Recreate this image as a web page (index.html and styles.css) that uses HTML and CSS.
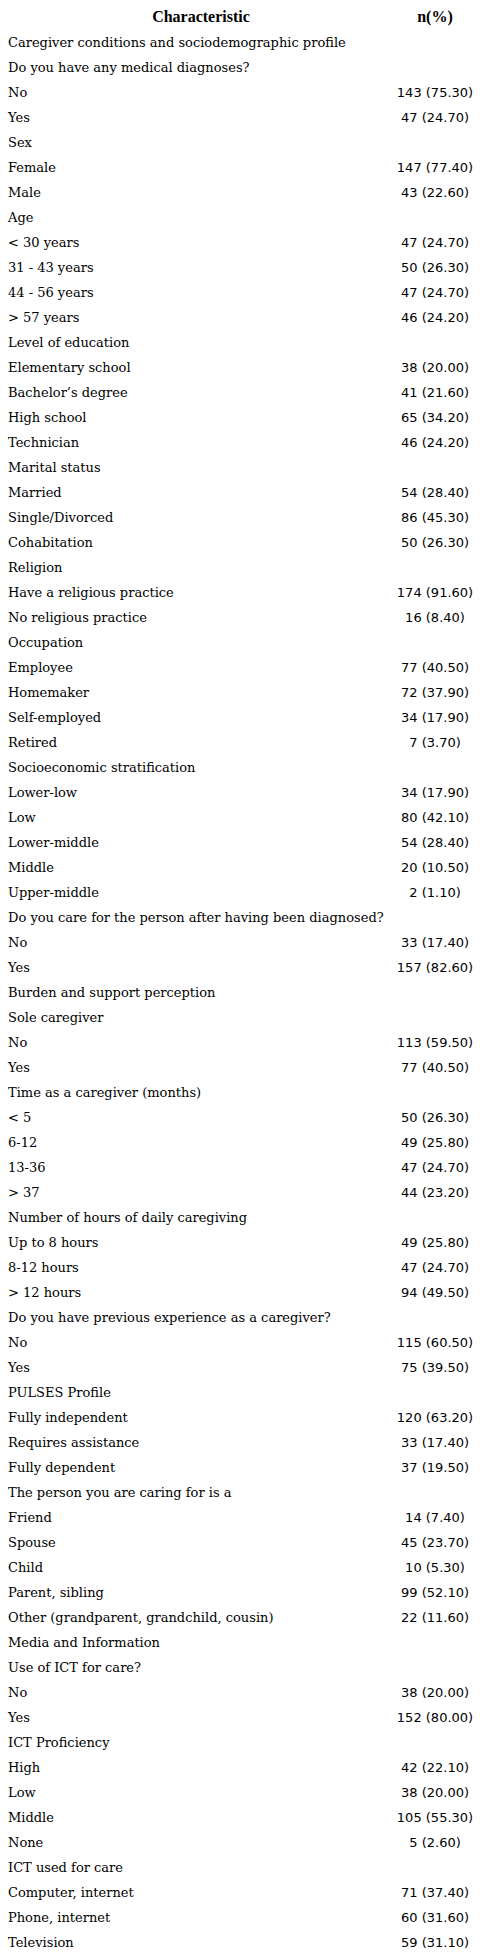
FILE: index.html
```html
<!DOCTYPE html>
<html lang="en">
<head>
<meta charset="utf-8">
<title>Caregiver characteristics</title>
<link rel="stylesheet" href="styles.css">
</head>
<body>
<table class="data">
<thead>
<tr><th class="c1">Characteristic</th><th class="c2">n(%)</th></tr>
</thead>
<tbody>
<tr><td>Caregiver conditions and sociodemographic profile</td><td></td></tr>
<tr><td>Do you have any medical diagnoses?</td><td></td></tr>
<tr><td>No</td><td>143 (75.30)</td></tr>
<tr><td>Yes</td><td>47 (24.70)</td></tr>
<tr><td>Sex</td><td></td></tr>
<tr><td>Female</td><td>147 (77.40)</td></tr>
<tr><td>Male</td><td>43 (22.60)</td></tr>
<tr><td>Age</td><td></td></tr>
<tr><td>&lt; 30 years</td><td>47 (24.70)</td></tr>
<tr><td>31 - 43 years</td><td>50 (26.30)</td></tr>
<tr><td>44 - 56 years</td><td>47 (24.70)</td></tr>
<tr><td>&gt; 57 years</td><td>46 (24.20)</td></tr>
<tr><td>Level of education</td><td></td></tr>
<tr><td>Elementary school</td><td>38 (20.00)</td></tr>
<tr><td>Bachelor’s degree</td><td>41 (21.60)</td></tr>
<tr><td>High school</td><td>65 (34.20)</td></tr>
<tr><td>Technician</td><td>46 (24.20)</td></tr>
<tr><td>Marital status</td><td></td></tr>
<tr><td>Married</td><td>54 (28.40)</td></tr>
<tr><td>Single/Divorced</td><td>86 (45.30)</td></tr>
<tr><td>Cohabitation</td><td>50 (26.30)</td></tr>
<tr><td>Religion</td><td></td></tr>
<tr><td>Have a religious practice</td><td>174 (91.60)</td></tr>
<tr><td>No religious practice</td><td>16 (8.40)</td></tr>
<tr><td>Occupation</td><td></td></tr>
<tr><td>Employee</td><td>77 (40.50)</td></tr>
<tr><td>Homemaker</td><td>72 (37.90)</td></tr>
<tr><td>Self-employed</td><td>34 (17.90)</td></tr>
<tr><td>Retired</td><td>7 (3.70)</td></tr>
<tr><td>Socioeconomic stratification</td><td></td></tr>
<tr><td>Lower-low</td><td>34 (17.90)</td></tr>
<tr><td>Low</td><td>80 (42.10)</td></tr>
<tr><td>Lower-middle</td><td>54 (28.40)</td></tr>
<tr><td>Middle</td><td>20 (10.50)</td></tr>
<tr><td>Upper-middle</td><td>2 (1.10)</td></tr>
<tr><td>Do you care for the person after having been diagnosed?</td><td></td></tr>
<tr><td>No</td><td>33 (17.40)</td></tr>
<tr><td>Yes</td><td>157 (82.60)</td></tr>
<tr><td>Burden and support perception</td><td></td></tr>
<tr><td>Sole caregiver</td><td></td></tr>
<tr><td>No</td><td>113 (59.50)</td></tr>
<tr><td>Yes</td><td>77 (40.50)</td></tr>
<tr><td>Time as a caregiver (months)</td><td></td></tr>
<tr><td>&lt; 5</td><td>50 (26.30)</td></tr>
<tr><td>6-12</td><td>49 (25.80)</td></tr>
<tr><td>13-36</td><td>47 (24.70)</td></tr>
<tr><td>&gt; 37</td><td>44 (23.20)</td></tr>
<tr><td>Number of hours of daily caregiving</td><td></td></tr>
<tr><td>Up to 8 hours</td><td>49 (25.80)</td></tr>
<tr><td>8-12 hours</td><td>47 (24.70)</td></tr>
<tr><td>&gt; 12 hours</td><td>94 (49.50)</td></tr>
<tr><td>Do you have previous experience as a caregiver?</td><td></td></tr>
<tr><td>No</td><td>115 (60.50)</td></tr>
<tr><td>Yes</td><td>75 (39.50)</td></tr>
<tr><td>PULSES Profile</td><td></td></tr>
<tr><td>Fully independent</td><td>120 (63.20)</td></tr>
<tr><td>Requires assistance</td><td>33 (17.40)</td></tr>
<tr><td>Fully dependent</td><td>37 (19.50)</td></tr>
<tr><td>The person you are caring for is a</td><td></td></tr>
<tr><td>Friend</td><td>14 (7.40)</td></tr>
<tr><td>Spouse</td><td>45 (23.70)</td></tr>
<tr><td>Child</td><td>10 (5.30)</td></tr>
<tr><td>Parent, sibling</td><td>99 (52.10)</td></tr>
<tr><td>Other (grandparent, grandchild, cousin)</td><td>22 (11.60)</td></tr>
<tr><td>Media and Information</td><td></td></tr>
<tr><td>Use of ICT for care?</td><td></td></tr>
<tr><td>No</td><td>38 (20.00)</td></tr>
<tr><td>Yes</td><td>152 (80.00)</td></tr>
<tr><td>ICT Proficiency</td><td></td></tr>
<tr><td>High</td><td>42 (22.10)</td></tr>
<tr><td>Low</td><td>38 (20.00)</td></tr>
<tr><td>Middle</td><td>105 (55.30)</td></tr>
<tr><td>None</td><td>5 (2.60)</td></tr>
<tr><td>ICT used for care</td><td></td></tr>
<tr><td>Computer, internet</td><td>71 (37.40)</td></tr>
<tr><td>Phone, internet</td><td>60 (31.60)</td></tr>
<tr><td>Television</td><td>59 (31.10)</td></tr>
</tbody>
</table>
</body>
</html>
```
FILE: styles.css
```css
html, body {
  background: #ffffff;
}
body {
  margin: 0;
  padding: 4px 8px 0 8px;
  color: #000000;
  font-family: "DejaVu Serif", "Liberation Serif", serif;
  font-size: 13px;
}
.data {
  width: 468px;
  border-collapse: collapse;
  table-layout: fixed;
}
.data th {
  height: 26px;
  padding: 0;
  font-family: "Liberation Serif", serif;
  font-size: 16px;
  font-weight: bold;
  text-align: center;
  vertical-align: middle;
  line-height: 18px;
}
.data .c1 { width: 386px; }
.data .c2 { width: 82px; }
.data td {
  height: 25px;
  padding: 0;
  white-space: nowrap;
  vertical-align: middle;
  line-height: 16px;
}
.data td:first-child {
  text-align: left;
}
.data td:last-child {
  text-align: center;
  font-family: "DejaVu Sans", sans-serif;
  font-size: 13px;
}
```
